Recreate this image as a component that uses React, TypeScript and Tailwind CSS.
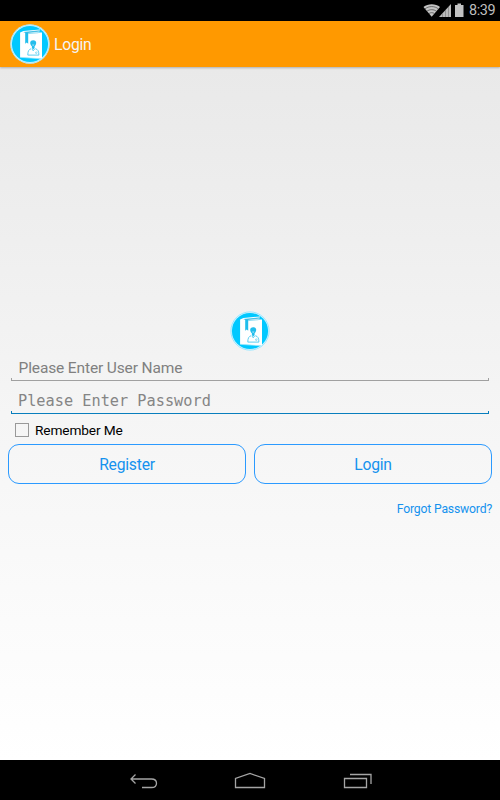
import React from "react";

function BookLogo() {
  return (
    <svg className="block size-10 shrink-0" viewBox="0 0 40 40" fill="none">
      <circle cx="20" cy="20" r="19.7" fill="#dff7ff" />
      <circle cx="20" cy="20" r="19.1" stroke="#70d9fa" strokeWidth="0.6" />
      <circle cx="20" cy="20" r="18.1" fill="#00c8ff" />
      <path d="M10.1 8.5 13.5 6.9 30 5.5v1.4l-2 1.6h4v26.3L10.1 33.2z" fill="#fff" />
      <path d="M13.2 8.1 30 6.2v1.2L16 9.3z" fill="#48bfe5" />
      <path d="M15.2 8.5h3v11.2l-1.5-1.1-1.5 1.1z" fill="#20bdec" />
      <path d="M18 9.6 28.5 8.7" stroke="#72d2ef" strokeWidth="0.8" />
      <path d="M10.2 33.3 32 34.9" stroke="#a5e9fb" strokeWidth="0.7" />
      <path d="M23.2 16.2c2 0 3.1 1.2 3 2.8-.1 1.6-1 2.7-1.6 3.2v2l-1.4 1-1.3-1v-2c-.8-.6-1.6-1.6-1.7-3.2-.1-1.6 1-2.8 3-2.8z" fill="#22bdec" />
      <path d="M22 20.4h2.4l-.6 1.4h-1.2z" fill="#9be2f5" />
      <path d="M21.2 24.7c-2.4.7-3.4 2.3-3.4 6.4h11.1c0-4.1-1-5.7-3.6-6.4M22 25l1.2 1.8 1.4-1.8" stroke="#48c8ef" strokeWidth="0.9" />
      <circle cx="26.3" cy="28.7" r="0.8" stroke="#48c8ef" strokeWidth="0.6" />
    </svg>
  );
}

function StatusBar() {
  return (
    <div className="flex h-[21px] shrink-0 items-center justify-end bg-black pr-[5px]">
      <svg className="block h-[21px] w-[44px]" viewBox="0 0 44 21">
        <path d="M3.5 7C8 3.2 15.5 3.2 20 7L11.7 16.7z" fill="#c4c4c4" />
        <path d="M5 8.9c3.7-3.1 9.7-3.1 13.4 0M7 11.2c2.6-2 6.8-2 9.4 0M9 13.5c1.6-1.1 3.8-1.1 5.4 0" stroke="#444" strokeWidth="0.7" fill="none" />
        <path d="M31 4v13H19z" fill="#bbb" />
        <path d="M22.5 13.5V17M25.5 10v7M28.5 7v10" stroke="#777" strokeWidth="0.6" />
        <path d="M35 5h2.5V3.5H41V5h2.5v12H35z" fill="#c2c2c2" />
      </svg>
      <span className="ml-[5px] w-[26px] whitespace-nowrap pt-px text-[14.4px] leading-[20px] tracking-[-0.35px] text-[#bebebe]">8:39</span>
    </div>
  );
}

function Field({ placeholder, password = false }: { placeholder: string; password?: boolean }) {
  return (
    <div className={`mx-[11px] flex h-[33px] flex-col ${password ? "text-[#087ebd]" : "text-[#a0a0a0]"}`}>
      <input
        type="text"
        placeholder={placeholder}
        className={
          password
            ? "h-[29px] w-full bg-transparent pt-[9px] pl-[7px] font-['DejaVu_Sans_Mono',monospace] text-[15.25px] leading-[20px] outline-none placeholder:text-[#858585]"
            : "h-[29px] w-full bg-transparent pt-[9px] pl-[7.5px] text-[15.5px] leading-[20px] tracking-[-0.13px] outline-none placeholder:text-[#808080]"
        }
      />
      <div className="h-[3px] border-x border-b border-current" />
    </div>
  );
}

function NavigationBar() {
  return (
    <div className="flex h-10 shrink-0 items-center justify-center bg-black">
      <svg className="block h-10 w-[250px]" viewBox="125 0 250 40" fill="none" stroke="#a5a5a5" strokeWidth="1.3">
        <path d="M135.5 14.5 131 19l4.5 4.5M131 19h20.5c3.2 0 5 1.8 5 4.2s-1.8 4.3-5 4.3H142" />
        <path d="M235.5 27.5v-9l14.5-5 14.5 5v9z" />
        <path d="M344.5 18.5h22v9h-22zM350 14.5h21V24" />
      </svg>
    </div>
  );
}

export default function App() {
  return (
    <div className="flex h-[800px] w-[500px] flex-col overflow-hidden font-[Roboto,sans-serif]">
      <StatusBar />
      <header className="z-10 flex h-[46px] shrink-0 items-center bg-[#ff9900] pl-[10px] shadow-[0_1px_2px_rgba(0,0,0,0.25)]">
        <BookLogo />
        <h1 className="ml-1 pt-px text-[15.7px] leading-[20px] tracking-[-0.25px] text-[#f5f5f5]">Login</h1>
      </header>
      <main className="flex min-h-0 flex-1 flex-col bg-linear-to-b from-[#e9e9e9] via-[#f5f5f5] to-white pt-[244px]">
        <div className="mb-[-2px] flex justify-center">
          <BookLogo />
        </div>
        <Field placeholder="Please Enter User Name" />
        <Field placeholder="Please Enter Password" password />
        <label className="ml-[15px] flex h-[29px] items-center text-[13.7px] leading-[20px] tracking-[-0.13px] text-black">
          <input type="checkbox" className="mr-[6px] size-[14px] appearance-none border border-[#999]" />
          <span className="pt-px">Remember Me</span>
        </label>
        <div className="mx-2 grid h-10 grid-cols-2 gap-2 text-[15.7px] tracking-[-0.23px] text-[#1592ee]">
          <button className="rounded-[11px] border border-[#2b9aff] pt-px">Register</button>
          <button className="rounded-[11px] border border-[#2b9aff] pt-px">Login</button>
        </div>
        <a className="mt-[15px] mr-2 self-end text-[12.2px] leading-[20px] tracking-[-0.17px] text-[#1592ee]">Forgot Password?</a>
      </main>
      <NavigationBar />
    </div>
  );
}
